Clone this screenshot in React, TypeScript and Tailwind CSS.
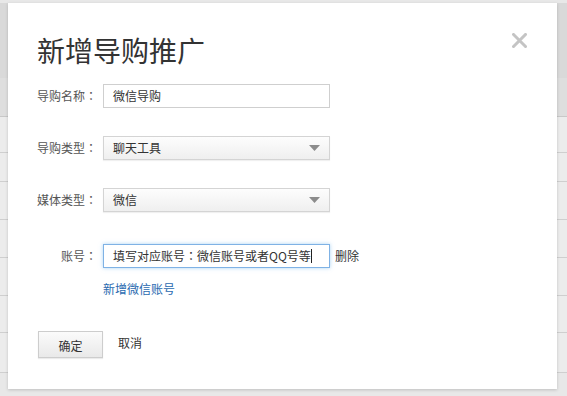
import React from "react";

const font = { fontFamily: '"Noto Sans CJK SC", "Noto Sans", sans-serif' };

// full-width colon centred in its cell, as in the reference
function Colon() {
    return <span className="font-['Noto_Sans_CJK_TC',sans-serif]">：</span>;
}

function Caret() {
    return (
        <svg width="11" height="6" viewBox="0 0 11 6" className="shrink-0">
            <path d="M0 0 L11 0 L5.5 6 Z" fill="#8c8c8c" />
        </svg>
    );
}

function Label({ children }: { children: React.ReactNode }) {
    return (
        <div className="-ml-[4px] w-[70px] shrink-0 whitespace-nowrap pr-[6px] text-right text-[12px] text-[#555]">
            {children}
            <Colon />
        </div>
    );
}

function Select({ value }: { value: string }) {
    return (
        <div className="flex h-[24px] w-[227px] items-center justify-between border border-[#d4d4d4] bg-gradient-to-b from-[#fdfdfd] to-[#efefef] pl-[9px] pr-[9px] text-[12px] text-[#333] shadow-[0_1px_1px_rgba(0,0,0,0.06)]">
            <span>{value}</span>
            <Caret />
        </div>
    );
}

export default function App() {
    return (
        <div className="relative h-[396px] w-[567px] overflow-hidden bg-[#e8e8e8]" style={font}>
            {/* page behind the modal */}
            <div className="flex flex-col pt-[3px]">
                <div className="h-[75px] bg-[#d9d9d9]" />
                <div className="h-[39px] border-b border-[#c8c8c8] bg-[#dedede]" />
                <div className="h-[36px] border-b border-[#cfcfcf] bg-[#ececec]" />
                <div className="h-[29px] border-b border-[#cfcfcf] bg-[#ececec]" />
                <div className="h-[38px] border-b border-[#cfcfcf] bg-[#ececec]" />
                <div className="h-[38px] border-b border-[#cfcfcf] bg-[#ececec]" />
                <div className="h-[38px] border-b border-[#cfcfcf] bg-[#ececec]" />
                <div className="h-[37px] border-b border-[#cfcfcf] bg-[#ececec]" />
                <div className="h-[40px] border-b border-[#cfcfcf] bg-[#ececec]" />
            </div>

            {/* modal */}
            <div className="absolute left-[8px] top-[3px] h-[386px] w-[549px] bg-white pl-[29px] pt-[27px] shadow-[0_1px_3px_rgba(0,0,0,0.18)]">
                <button className="absolute left-[504px] top-[30px] p-0">
                    <svg width="15" height="15" viewBox="0 0 15 15">
                        <path d="M1.5 1.5 L13.5 13.5 M13.5 1.5 L1.5 13.5" stroke="#c4c4c4" strokeWidth="3" strokeLinecap="square" />
                    </svg>
                </button>

                <h1 className="text-[28px] font-normal leading-[40px] text-[#333]">新增导购推广</h1>

                <div className="mt-[14px] flex h-[24px] items-center">
                    <Label>导购名称</Label>
                    <div className="flex h-[24px] w-[227px] items-center border border-[#cfcfcf] pl-[9px] text-[12px] text-[#333]">
                        微信导购
                    </div>
                </div>

                <div className="mt-[28px] flex h-[24px] items-center">
                    <Label>导购类型</Label>
                    <Select value="聊天工具" />
                </div>

                <div className="mt-[28px] flex h-[24px] items-center">
                    <Label>媒体类型</Label>
                    <Select value="微信" />
                </div>

                <div className="mt-[32px] flex h-[24px] items-center">
                    <Label>账号</Label>
                    <div className="flex h-[24px] w-[227px] items-center whitespace-nowrap border border-[#7fb2e5] pl-[9px] text-[12px] text-[#333] shadow-[0_0_4px_rgba(102,175,233,0.55)]">
                        填写对应账号
                        <Colon />
                        微信账号或者QQ号等
                        <span className="inline-block h-[14px] w-[1px] bg-[#222]" />
                    </div>
                    <span className="ml-[5px] text-[12px] text-[#333]">删除</span>
                </div>

                <div className="mt-[13px] pl-[66px] text-[12px] leading-[16px] text-[#2a6ab0]">新增微信账号</div>

                <div className="mt-[34px] flex items-center">
                    <button className="ml-[1px] h-[27px] w-[65px] border border-[#cdcdcd] bg-gradient-to-b from-[#fbfbfb] to-[#e9e9e9] pt-[2px] text-[12px] text-[#333] shadow-[0_1px_1px_rgba(0,0,0,0.08)]">
                        确定
                    </button>
                    <span className="mb-[4px] ml-[15px] text-[12px] text-[#333]">取消</span>
                </div>
            </div>
        </div>
    );
}
